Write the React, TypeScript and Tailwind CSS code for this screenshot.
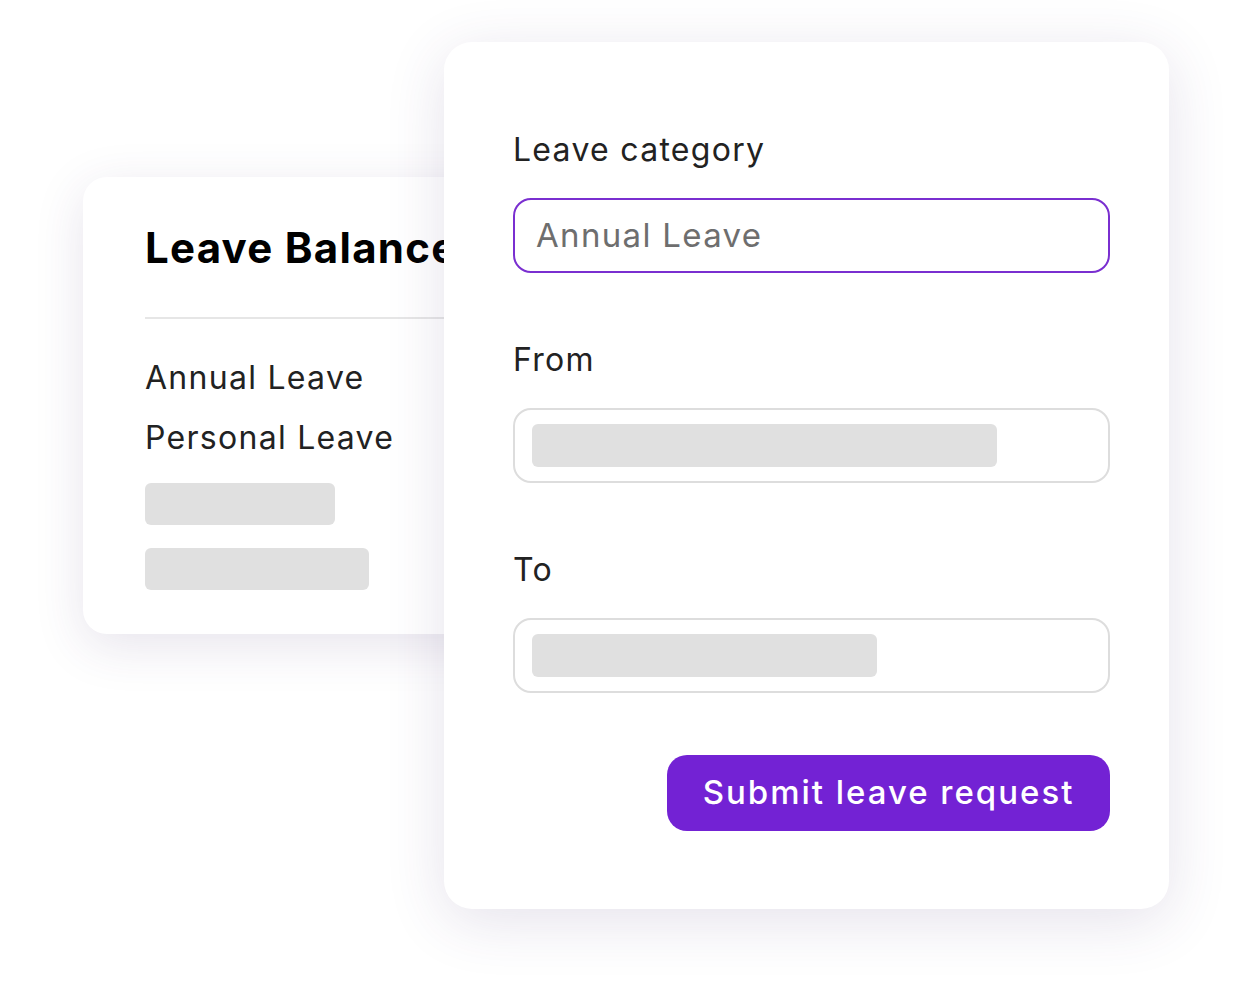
const sans = "font-['Inter','Liberation_Sans',sans-serif]";

function SkeletonBar({ width }: { width: string }) {
  return <div className={`h-[42px] rounded-md bg-[#e0e0e0] ${width}`} />;
}

function BalanceCard() {
  return (
    <div className="absolute left-[83px] top-[177px] w-[460px] rounded-[24px] bg-white pl-[62px] pt-[46px] pb-[44px] shadow-[0_12px_50px_rgba(70,50,110,0.13)]">
      <h2 className="text-[42px] font-bold leading-[50px] tracking-[0.03em] whitespace-nowrap text-black">Leave Balance</h2>
      <div className="mt-[44px] h-[2px] bg-[#e6e6e6]" />
      <div className="mt-[39px] flex flex-col gap-[20px] text-[32px] leading-[40px] tracking-[0.04em] text-[#222]">
        <p>Annual Leave</p>
        <p>Personal Leave</p>
      </div>
      <div className="mt-[25px] flex flex-col gap-[23px]">
        <SkeletonBar width="w-[190px]" />
        <SkeletonBar width="w-[224px]" />
      </div>
    </div>
  );
}

function Field({ label, children, accent }: { label: string; children: React.ReactNode; accent?: boolean }) {
  return (
    <div className="flex flex-col gap-[28px]">
      <p className="text-[32px] leading-[40px] tracking-[0.04em] text-[#222]">{label}</p>
      <div
        className={`flex h-[75px] items-center rounded-[18px] border-2 bg-white ${
          accent ? "border-[#7a2fd0] px-[21px]" : "border-[#dddddd] px-[17px]"
        }`}
      >
        {children}
      </div>
    </div>
  );
}

function RequestCard() {
  return (
    <div className="absolute left-[444px] top-[42px] w-[725px] rounded-[28px] bg-white pl-[69px] pr-[59px] pt-[88px] pb-[78px] shadow-[0_12px_60px_rgba(70,50,110,0.14)]">
      <div className="flex flex-col gap-[67px]">
        <Field label="Leave category" accent>
          <span className="text-[33px] tracking-[0.04em] text-[#6e6e6e]">Annual Leave</span>
        </Field>
        <Field label="From">
          <div className="h-[43px] w-[465px] rounded-md bg-[#e0e0e0]" />
        </Field>
        <Field label="To">
          <div className="h-[43px] w-[345px] rounded-md bg-[#e0e0e0]" />
        </Field>
      </div>
      <div className="mt-[62px] flex justify-end">
        <button className="h-[76px] w-[443px] rounded-[20px] bg-[#7322d4] text-[33px] font-medium tracking-[0.06em] text-white">
          Submit leave request
        </button>
      </div>
    </div>
  );
}

export default function App() {
  return (
    <div className={`relative h-[1002px] w-[1240px] overflow-hidden bg-white ${sans}`}>
      <BalanceCard />
      <RequestCard />
    </div>
  );
}
